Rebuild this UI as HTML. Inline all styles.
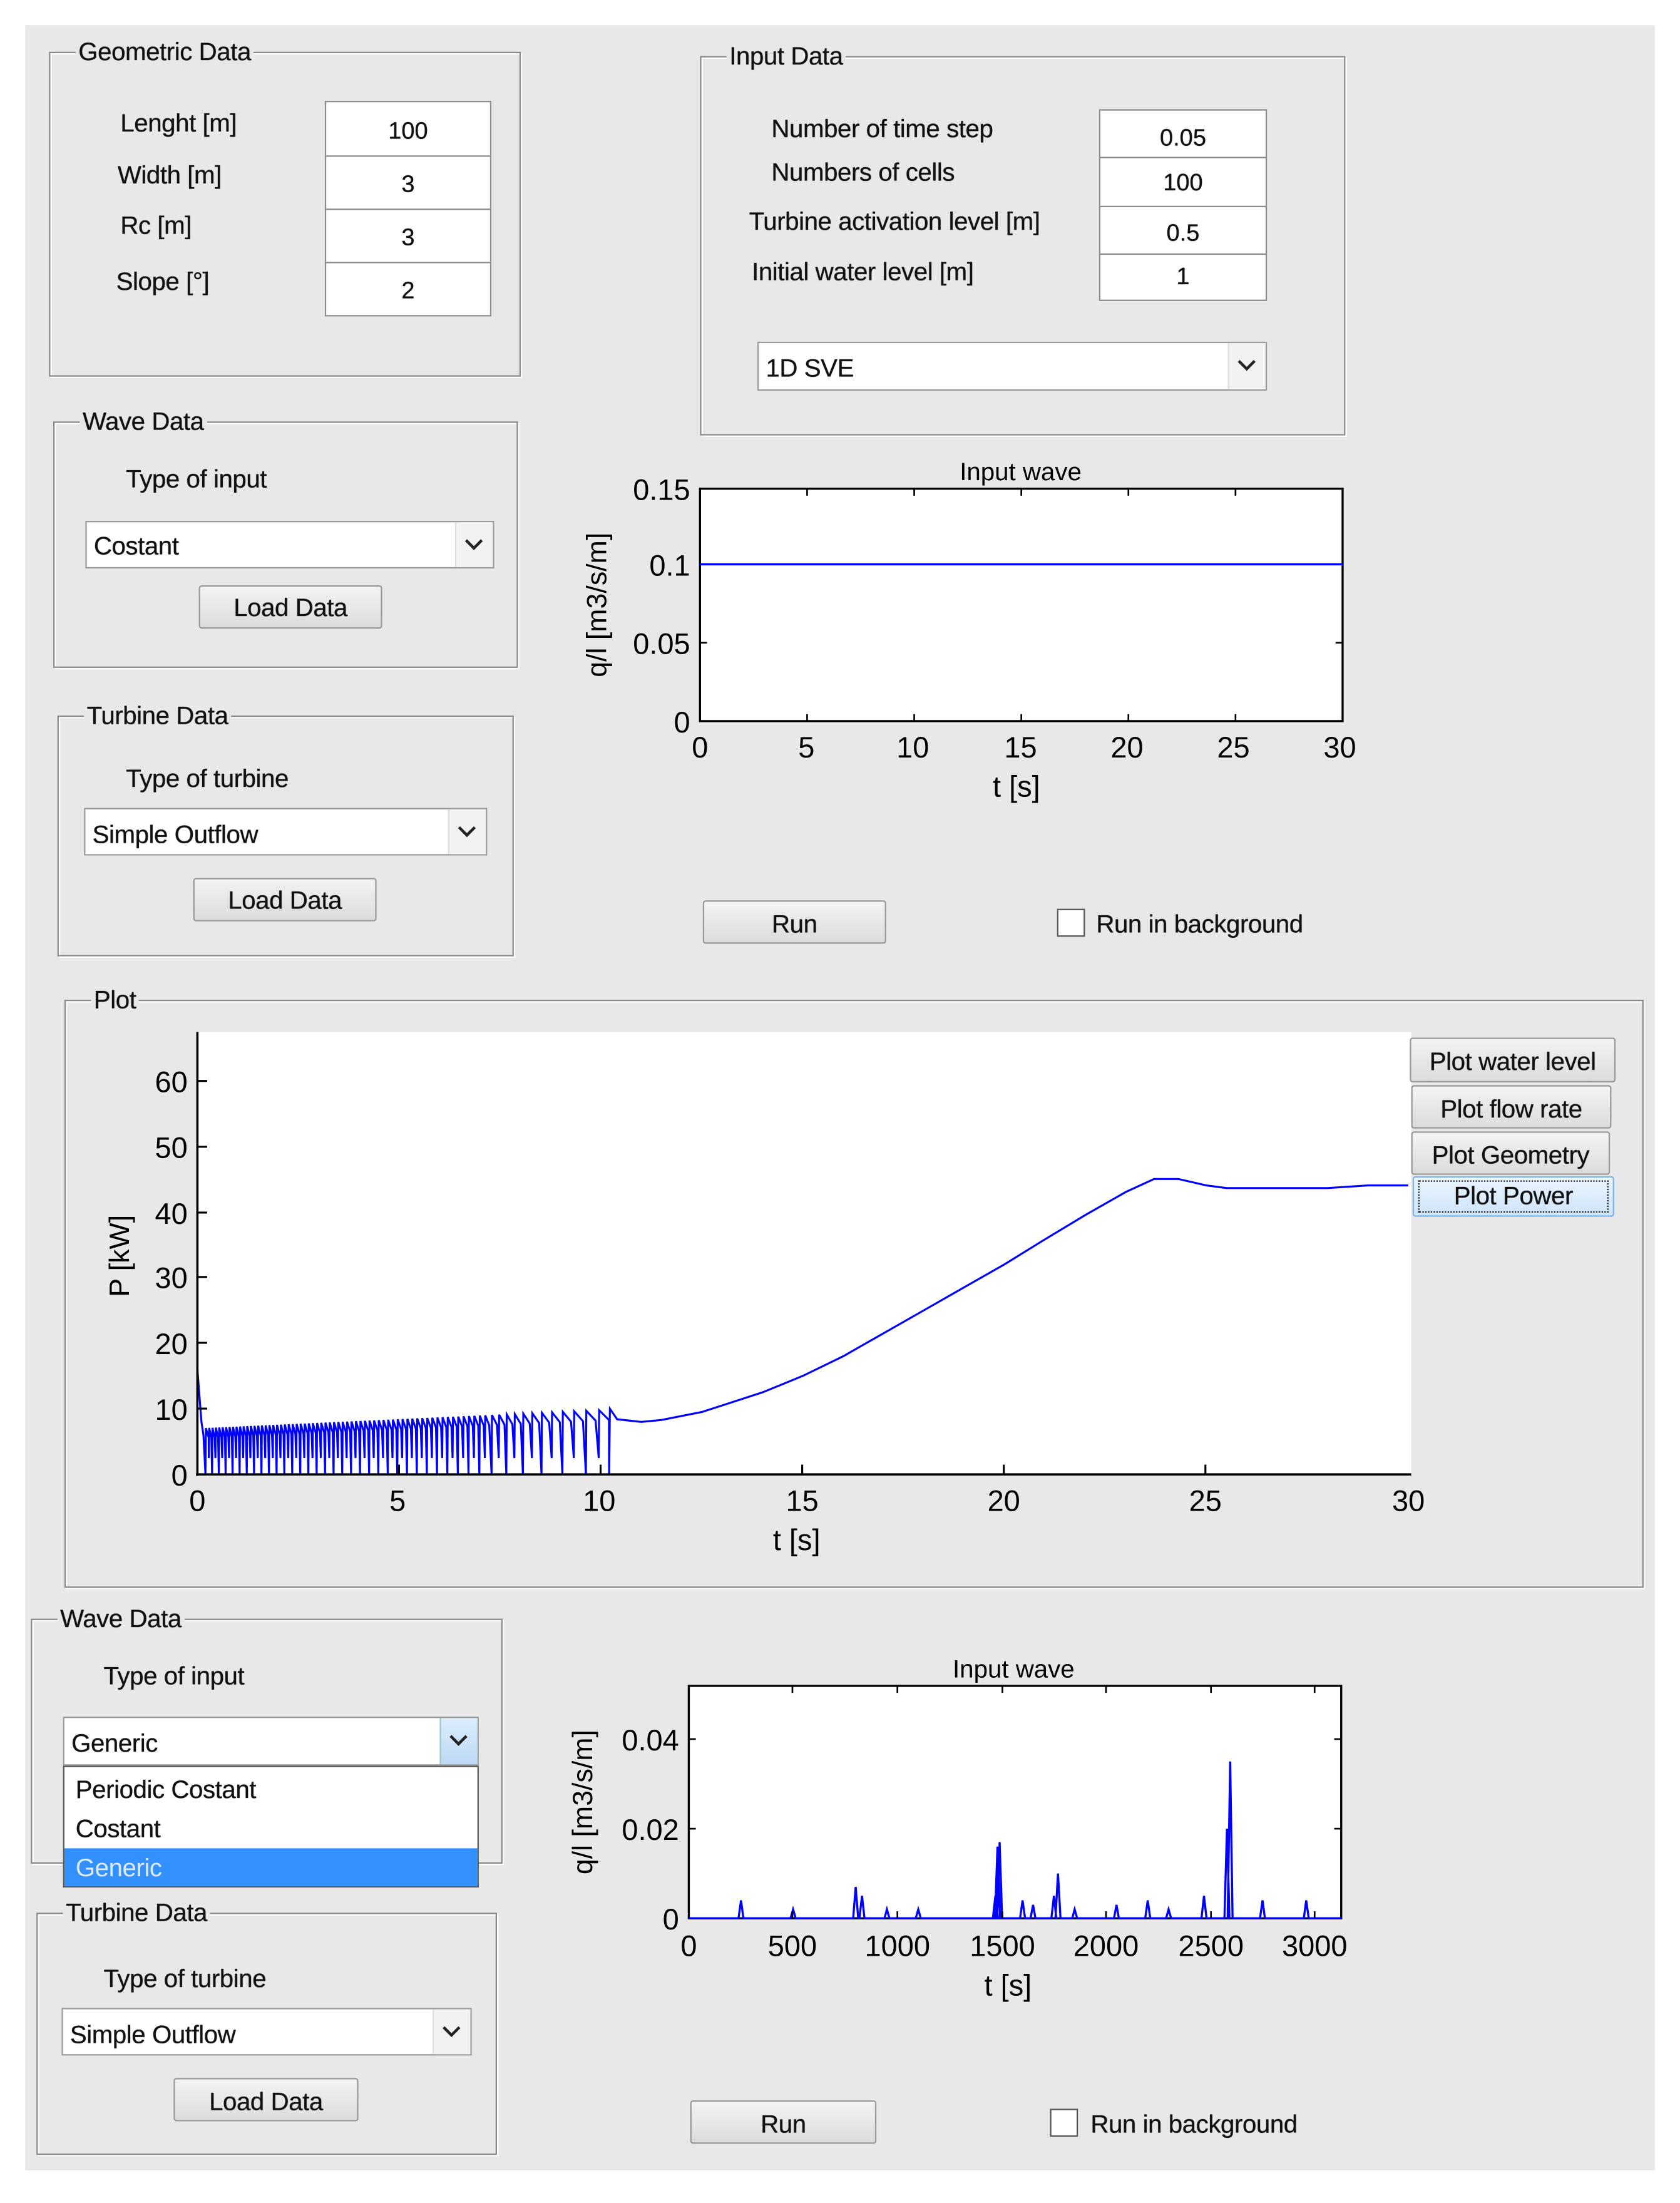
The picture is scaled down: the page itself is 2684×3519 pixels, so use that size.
<!DOCTYPE html>
<html><head><meta charset="utf-8">
<style>
html,body{margin:0;padding:0;background:#fff;width:2684px;height:3519px;overflow:hidden}
#s{position:absolute;left:0;top:0;width:1200px;height:1573px;transform:scale(2.23667);transform-origin:0 0;font-family:"Liberation Sans",sans-serif;color:#111}
.a{position:absolute}
.bg{left:18px;top:18px;width:1164px;height:1532px;background:#e8e8e8}
.g{position:absolute;border:1px solid #8a8a8a;box-shadow:1px 1px 0 #fff, inset 1px 1px 0 #fff}
.gt{position:absolute;background:#e8e8e8;padding:0 2px;font-size:18px;line-height:18px;top:-10px;left:18px;letter-spacing:-0.2px;text-shadow:0 0 0.4px #000}
.l{position:absolute;font-size:18px;line-height:18px;white-space:nowrap;letter-spacing:-0.2px;text-shadow:0 0 0.4px #000}
.ed{position:absolute;background:#fff;border:1px solid #8c8c8c;font-size:17px;text-align:center;box-sizing:border-box;text-shadow:0 0 0.4px #000}
.dd{position:absolute;background:#fff;border:1px solid #9a9a9a;box-sizing:border-box;font-size:18px;padding-left:5px;letter-spacing:-0.2px;text-shadow:0 0 0.4px #000}
.dd .ar{position:absolute;right:0;top:0;bottom:0;width:26px;background:#f2f2f2;border-left:1px solid #ddd}
.dd .ar:after{content:"";position:absolute;left:8px;top:9px;width:7px;height:7px;border-right:2px solid #222;border-bottom:2px solid #222;transform:rotate(45deg)}
.bt{position:absolute;box-sizing:border-box;border:1px solid #999;border-radius:2px;background:linear-gradient(#f3f3f3,#dcdcdc);font-size:18px;text-align:center;letter-spacing:-0.2px;text-shadow:0 0 0.4px #000;white-space:nowrap}
.cb{position:absolute;width:20px;height:20px;box-sizing:border-box;border:1px solid #555;background:#fff}
svg text{font-family:"Liberation Sans",sans-serif}
</style></head><body>
<div id="s">
<div class="a bg"></div>

<!-- Geometric Data -->
<div class="g" style="left:35px;top:37px;width:335px;height:230px"><div class="gt">Geometric Data</div></div>
<div class="l" style="left:86px;top:79px">Lenght [m]</div>
<div class="l" style="left:84px;top:116px">Width [m]</div>
<div class="l" style="left:86px;top:152px">Rc [m]</div>
<div class="l" style="left:83px;top:192px">Slope [°]</div>
<div class="ed" style="left:232px;top:72px;width:119px;height:40px;line-height:42px">100</div>
<div class="ed" style="left:232px;top:111px;width:119px;height:39px;line-height:40px">3</div>
<div class="ed" style="left:232px;top:149px;width:119px;height:39px;line-height:40px">3</div>
<div class="ed" style="left:232px;top:187px;width:119px;height:39px;line-height:40px">2</div>

<!-- Input Data -->
<div class="g" style="left:500px;top:40px;width:459px;height:269px"><div class="gt">Input Data</div></div>
<div class="l" style="left:551px;top:83px">Number of time step</div>
<div class="l" style="left:551px;top:114px">Numbers of cells</div>
<div class="l" style="left:535px;top:149px">Turbine activation level [m]</div>
<div class="l" style="left:537px;top:185px">Initial water level [m]</div>
<div class="ed" style="left:785px;top:78px;width:120px;height:35px;line-height:40px">0.05</div>
<div class="ed" style="left:785px;top:112px;width:120px;height:36px;line-height:36px">100</div>
<div class="ed" style="left:785px;top:147px;width:120px;height:35px;line-height:38px">0.5</div>
<div class="ed" style="left:785px;top:181px;width:120px;height:34px;line-height:32px">1</div>
<div class="dd" style="left:541px;top:244px;width:364px;height:35px;line-height:37px">1D SVE<div class="ar"></div></div>

<!-- Wave Data 1 -->
<div class="g" style="left:38px;top:301px;width:330px;height:174px"><div class="gt">Wave Data</div></div>
<div class="l" style="left:90px;top:333px">Type of input</div>
<div class="dd" style="left:61px;top:372px;width:292px;height:34px;line-height:35px">Costant<div class="ar"></div></div>
<div class="bt" style="left:142px;top:418px;width:131px;height:31px;line-height:31px">Load Data</div>

<!-- Turbine Data 1 -->
<div class="g" style="left:41px;top:511px;width:324px;height:170px"><div class="gt">Turbine Data</div></div>
<div class="l" style="left:90px;top:547px">Type of turbine</div>
<div class="dd" style="left:60px;top:577px;width:288px;height:34px;line-height:36px">Simple Outflow<div class="ar"></div></div>
<div class="bt" style="left:138px;top:627px;width:131px;height:31px;line-height:31px">Load Data</div>

<!-- Plot 1 -->
<svg class="a" style="left:0;top:0" width="1200" height="700">
<rect x="500" y="349" width="459" height="166" fill="#fff" stroke="#000" stroke-width="1.5"/>
<g stroke="#000" stroke-width="1.2">
<line x1="500" y1="403" x2="505" y2="403"/><line x1="500" y1="459" x2="505" y2="459"/>
<line x1="959" y1="403" x2="954" y2="403"/><line x1="959" y1="459" x2="954" y2="459"/>
<line x1="576.5" y1="515" x2="576.5" y2="510"/><line x1="653" y1="515" x2="653" y2="510"/><line x1="729.5" y1="515" x2="729.5" y2="510"/><line x1="806" y1="515" x2="806" y2="510"/><line x1="882.5" y1="515" x2="882.5" y2="510"/>
<line x1="576.5" y1="349" x2="576.5" y2="354"/><line x1="653" y1="349" x2="653" y2="354"/><line x1="729.5" y1="349" x2="729.5" y2="354"/><line x1="806" y1="349" x2="806" y2="354"/><line x1="882.5" y1="349" x2="882.5" y2="354"/>
</g>
<line x1="500" y1="403" x2="959" y2="403" stroke="#0000ff" stroke-width="1.6"/>
<g font-size="21" text-anchor="end">
<text x="493" y="357">0.15</text><text x="493" y="411">0.1</text><text x="493" y="467">0.05</text><text x="493" y="523">0</text></g>
<g font-size="21" text-anchor="middle">
<text x="500" y="541">0</text><text x="576" y="541">5</text><text x="652" y="541">10</text><text x="729" y="541">15</text><text x="805" y="541">20</text><text x="881" y="541">25</text><text x="957" y="541">30</text>
<text x="726" y="569">t [s]</text>
<text x="729" y="343" font-size="18">Input wave</text>
<text transform="translate(433,432) rotate(-90)" font-size="20">q/l [m3/s/m]</text>
</g>
</svg>
<div class="bt" style="left:502px;top:643px;width:131px;height:31px;line-height:33px">Run</div>
<div class="cb" style="left:755px;top:649px"></div>
<div class="l" style="left:783px;top:651px">Run in background</div>

<!-- Plot group -->
<div class="g" style="left:46px;top:714px;width:1126px;height:418px"><div class="gt">Plot</div></div>
<div class="a" style="left:141px;top:737px;width:867px;height:316px;background:#fff"></div>
<svg class="a" style="left:0;top:0" width="1200" height="1140">
<path id="pw" fill="none" stroke="#0000ff" stroke-width="1.4"/>
<g stroke="#000" stroke-width="1.6"><line x1="141" y1="737" x2="141" y2="1054"/><line x1="140" y1="1053" x2="1008" y2="1053"/></g>
<g stroke="#000" stroke-width="1.4">
<line x1="141" y1="1006" x2="148" y2="1006"/><line x1="141" y1="959" x2="148" y2="959"/><line x1="141" y1="912" x2="148" y2="912"/><line x1="141" y1="866" x2="148" y2="866"/><line x1="141" y1="819" x2="148" y2="819"/><line x1="141" y1="772" x2="148" y2="772"/>
<line x1="285" y1="1053" x2="285" y2="1046"/><line x1="429" y1="1053" x2="429" y2="1046"/><line x1="573" y1="1053" x2="573" y2="1046"/><line x1="717" y1="1053" x2="717" y2="1046"/><line x1="861" y1="1053" x2="861" y2="1046"/>
</g>
<g font-size="21" text-anchor="end">
<text x="134" y="1061">0</text><text x="134" y="1014">10</text><text x="134" y="967">20</text><text x="134" y="920">30</text><text x="134" y="874">40</text><text x="134" y="827">50</text><text x="134" y="780">60</text></g>
<g font-size="21" text-anchor="middle">
<text x="141" y="1079">0</text><text x="284" y="1079">5</text><text x="428" y="1079">10</text><text x="573" y="1079">15</text><text x="717" y="1079">20</text><text x="861" y="1079">25</text><text x="1006" y="1079">30</text>
<text x="569" y="1107">t [s]</text>
<text transform="translate(92,897) rotate(-90)" font-size="20">P [kW]</text>
</g>
</svg>
<div class="bt" style="left:1007px;top:741px;width:147px;height:32px;line-height:33px">Plot water level</div>
<div class="bt" style="left:1008px;top:775px;width:143px;height:31px;line-height:33px">Plot flow rate</div>
<div class="bt" style="left:1008px;top:808px;width:142px;height:31px;line-height:33px">Plot Geometry</div>
<div class="bt" style="left:1009px;top:840px;width:144px;height:29px;line-height:27px;background:linear-gradient(#eaf4fd,#cfe6fa);border-color:#7eb4ea"><div style="position:absolute;left:3px;top:2px;right:3px;bottom:2px;border:1px dotted #222"></div>Plot Power</div>

<!-- Wave Data 2 -->
<div class="g" style="left:22px;top:1156px;width:335px;height:173px"><div class="gt">Wave Data</div></div>
<div class="l" style="left:74px;top:1188px">Type of input</div>
<div class="dd" style="left:45px;top:1226px;width:297px;height:35px;line-height:37px">Generic<div class="ar" style="background:linear-gradient(#dcecfc,#bcd9f6);border-left:1px solid #9cc"></div></div>

<!-- Turbine Data 2 -->
<div class="g" style="left:26px;top:1366px;width:327px;height:171px"><div class="gt">Turbine Data</div></div>
<div class="l" style="left:74px;top:1404px">Type of turbine</div>
<div class="dd" style="left:44px;top:1434px;width:293px;height:34px;line-height:36px">Simple Outflow<div class="ar"></div></div>
<div class="bt" style="left:124px;top:1484px;width:132px;height:31px;line-height:33px">Load Data</div>

<!-- dropdown list -->
<div class="a" style="left:45px;top:1261px;width:297px;height:87px;background:#fff;border:1px solid #555;box-sizing:border-box;font-size:18px;letter-spacing:-0.2px;text-shadow:0 0 0.4px #000">
<div class="a" style="left:8px;top:6px">Periodic Costant</div>
<div class="a" style="left:8px;top:34px">Costant</div>
<div class="a" style="left:0;top:58px;right:0;height:27px;background:#3391ff;color:#dde9ff;padding-left:8px;line-height:28px;text-shadow:none">Generic</div>
</div>

<!-- Plot 2 -->
<svg class="a" style="left:0;top:1150px" width="1200" height="300">
<g transform="translate(0,-1150)">
<rect x="492" y="1204" width="466" height="166" fill="#fff" stroke="#000" stroke-width="1.5"/>
<path id="w2" fill="none" stroke="#0000ff" stroke-width="1.5"/>
<g stroke="#000" stroke-width="1.2">
<line x1="492" y1="1242" x2="497" y2="1242"/><line x1="492" y1="1306" x2="497" y2="1306"/>
<line x1="958" y1="1242" x2="953" y2="1242"/><line x1="958" y1="1306" x2="953" y2="1306"/>
<line x1="566" y1="1370" x2="566" y2="1365"/><line x1="641" y1="1370" x2="641" y2="1365"/><line x1="716" y1="1370" x2="716" y2="1365"/><line x1="790" y1="1370" x2="790" y2="1365"/><line x1="865" y1="1370" x2="865" y2="1365"/><line x1="939" y1="1370" x2="939" y2="1365"/>
<line x1="566" y1="1204" x2="566" y2="1209"/><line x1="641" y1="1204" x2="641" y2="1209"/><line x1="716" y1="1204" x2="716" y2="1209"/><line x1="790" y1="1204" x2="790" y2="1209"/><line x1="865" y1="1204" x2="865" y2="1209"/><line x1="939" y1="1204" x2="939" y2="1209"/>
</g>
<g font-size="21" text-anchor="end"><text x="485" y="1250">0.04</text><text x="485" y="1314">0.02</text><text x="485" y="1378">0</text></g>
<g font-size="21" text-anchor="middle">
<text x="492" y="1397">0</text><text x="566" y="1397">500</text><text x="641" y="1397">1000</text><text x="716" y="1397">1500</text><text x="790" y="1397">2000</text><text x="865" y="1397">2500</text><text x="939" y="1397">3000</text>
<text x="720" y="1425">t [s]</text>
<text x="724" y="1198" font-size="18">Input wave</text>
<text transform="translate(423,1287) rotate(-90)" font-size="20">q/l [m3/s/m]</text>
</g></g>
</svg>
<div class="bt" style="left:493px;top:1500px;width:133px;height:31px;line-height:33px">Run</div>
<div class="cb" style="left:750px;top:1506px"></div>
<div class="l" style="left:779px;top:1508px">Run in background</div>
</div>
<script>
(function(){
var X=function(t){return 141+t*28.83},Y=function(p){return 1053-p*4.69};
var d="M"+X(0)+" "+Y(16);
d+=" L"+X(0.05)+" "+Y(12)+" L"+X(0.1)+" "+Y(8)+" L"+X(0.15)+" "+Y(6);
var t=0.2,per=0.1,k=0;
while(t<10.2){
 var pk=7+(t/10)*2.8;
 var lo=(k%2==0)?0:2.5;
 d+=" L"+X(t)+" "+Y(lo)+" L"+X(t+0.01)+" "+Y(pk)+" L"+X(t+per*0.8)+" "+Y(pk-1.5);
 per = t<7?0.08+t*0.008:0.16+(t-7)*0.06;
 t+=per;k++;
}
d+=" L"+X(10.2)+" "+Y(0)+" L"+X(10.22)+" "+Y(10)+" L"+X(10.4)+" "+Y(8.4);
var pts=[[11,8],[11.5,8.3],[12.5,9.5],[14,12.5],[15,15],[16,18],[17,21.5],[18,25],[19,28.5],[20,32],[21,35.8],[22,39.5],[23,43],[23.7,45],[24.3,45],[25,44],[25.5,43.6],[27,43.6],[28,43.6],[29,44],[30,44]];
pts.forEach(function(p){d+=" L"+X(p[0]).toFixed(1)+" "+Y(p[1]).toFixed(1)});
document.getElementById("pw").setAttribute("d",d);
var XX=function(v){return 492+v*0.149},YY=function(q){return 1370-q*3200};
var sp=[[250,0.004],[500,0.002],[800,0.007],[830,0.005],[950,0.002],[1100,0.002],[1470,0.005],[1480,0.016],[1490,0.017],[1600,0.004],[1650,0.003],[1750,0.005],[1770,0.01],[1850,0.002],[2050,0.003],[2200,0.004],[2300,0.002],[2470,0.005],[2580,0.02],[2595,0.035],[2750,0.004],[2960,0.004]];
var e="M"+XX(0)+" "+YY(0);
sp.forEach(function(s){e+=" L"+XX(s[0]-12).toFixed(1)+" "+YY(0)+" L"+XX(s[0]).toFixed(1)+" "+YY(s[1]).toFixed(1)+" L"+XX(s[0]+12).toFixed(1)+" "+YY(0)});
e+=" L"+XX(3130)+" "+YY(0);
document.getElementById("w2").setAttribute("d",e);
})();
</script>
</body></html>
